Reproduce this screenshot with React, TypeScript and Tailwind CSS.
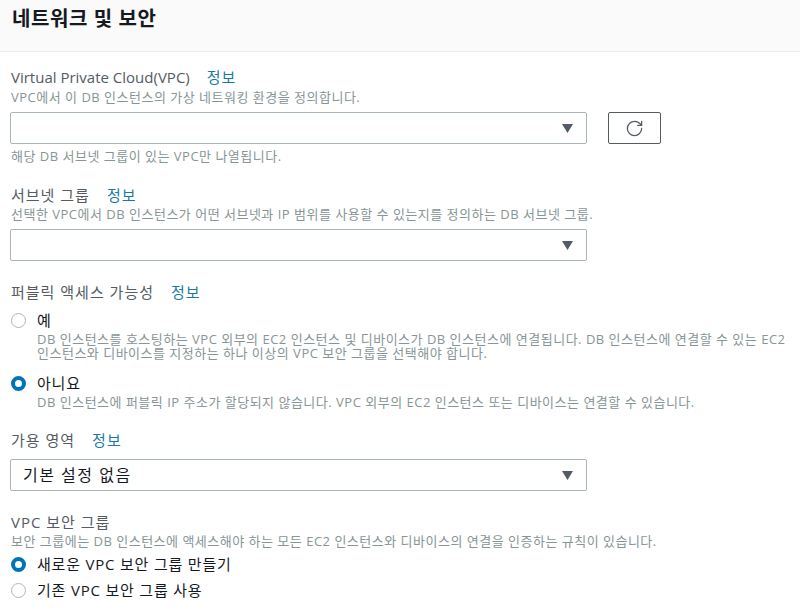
import { RotateCw } from 'lucide-react';

const font = { fontFamily: '"Open Sans", "Noto Sans CJK KR", sans-serif' };

const Info = () => <span className="ml-[17px] tracking-[1px] text-[#187aa0]">정보</span>;

const Label: React.FC<{ text: string; info?: boolean; ko?: boolean; className?: string }> = ({
  text,
  info,
  ko,
  className = '',
}) => (
  <div className={`text-[15px] leading-[20px] text-[#545b64] ${className}`}>
    <span className={ko ? 'tracking-[1px]' : ''}>{text}</span>
    {info && <Info />}
  </div>
);

const Desc: React.FC<{ children: React.ReactNode; className?: string }> = ({ children, className = '' }) => (
  <div className={`text-[13px] leading-[14px] tracking-[0.5px] text-[#879596] ${className}`}>{children}</div>
);

const Select: React.FC<{ value?: string; className?: string }> = ({ value, className = '' }) => (
  <div
    className={`w-[577px] h-[32px] border border-[#aab7b8] rounded-[2px] bg-white flex items-center justify-between pl-[12px] pr-[13px] ${className}`}
  >
    <span className="text-[16px] tracking-[1.5px] text-[#16191f]">{value}</span>
    <svg width="11" height="9" viewBox="0 0 11 9">
      <path d="M0 0 H11 L5.5 9 Z" fill="#545b64" />
    </svg>
  </div>
);

const Radio: React.FC<{ checked?: boolean; label: string; className?: string }> = ({ checked, label, className = '' }) => (
  <div className={`flex items-center h-[20px] ${className}`}>
    {checked ? (
      <span className="w-[15px] h-[15px] rounded-full border-[4px] border-[#0073bb] bg-white" />
    ) : (
      <span className="w-[15px] h-[15px] rounded-full border border-[#aab7b8] bg-white" />
    )}
    <span className="ml-[11px] text-[15px] tracking-[0.8px] text-[#16191f]">{label}</span>
  </div>
);

export default function App() {
  return (
    <div className="w-[800px] h-[612px] bg-white overflow-hidden" style={font}>
      <div className="h-[52px] bg-[#fafafa] border-b border-[#eaeded] pl-[12px] pt-[5px]">
        <h2 className="text-[20px] leading-[28px] tracking-[0.6px] font-bold text-[#16191f]">네트워크 및 보안</h2>
      </div>

      <div className="pl-[10px]">
        <Label text="Virtual Private Cloud(VPC)" info className="mt-[15px] pl-[1px]" />
        <Desc className="mt-[3px] pl-[1px]">VPC에서 이 DB 인스턴스의 가상 네트워킹 환경을 정의합니다.</Desc>
        <div className="flex items-center mt-[8px]">
          <Select />
          <button className="ml-[21px] w-[53px] h-[32px] border border-[#545b64] rounded-[2px] flex items-center justify-center text-[#545b64]">
            <RotateCw size={19} strokeWidth={1.6} />
          </button>
        </div>
        <Desc className="mt-[5px] pl-[1px]">해당 DB 서브넷 그룹이 있는 VPC만 나열됩니다.</Desc>

        <Label text="서브넷 그룹" ko info className="mt-[22px] pl-[1px]" />
        <Desc className="mt-[2px] pl-[1px]">
          선택한 VPC에서 DB 인스턴스가 어떤 서브넷과 IP 범위를 사용할 수 있는지를 정의하는 DB 서브넷 그룹.
        </Desc>
        <Select className="mt-[8px]" />

        <Label text="퍼블릭 액세스 가능성" ko info className="mt-[21px] pl-[1px]" />
        <Radio label="예" className="mt-[8px] pl-[1px]" />
        <Desc className="mt-[2px] pl-[27px] whitespace-nowrap">
          DB 인스턴스를 호스팅하는 VPC 외부의 EC2 인스턴스 및 디바이스가 DB 인스턴스에 연결됩니다. DB 인스턴스에 연결할 수 있는 EC2
          <br />
          인스턴스와 디바이스를 지정하는 하나 이상의 VPC 보안 그룹을 선택해야 합니다.
        </Desc>
        <Radio checked label="아니요" className="mt-[13px] pl-[1px]" />
        <Desc className="mt-[2px] pl-[27px]">
          DB 인스턴스에 퍼블릭 IP 주소가 할당되지 않습니다. VPC 외부의 EC2 인스턴스 또는 디바이스는 연결할 수 있습니다.
        </Desc>

        <Label text="가용 영역" ko info className="mt-[21px] pl-[1px]" />
        <Select value="기본 설정 없음" className="mt-[9px]" />

        <Label text="VPC 보안 그룹" ko className="mt-[21px] pl-[1px]" />
        <Desc className="mt-[2px] pl-[1px]">
          보안 그룹에는 DB 인스턴스에 액세스해야 하는 모든 EC2 인스턴스와 디바이스의 연결을 인증하는 규칙이 있습니다.
        </Desc>
        <Radio checked label="새로운 VPC 보안 그룹 만들기" className="mt-[6px] pl-[1px]" />
        <Radio label="기존 VPC 보안 그룹 사용" className="mt-[6px] pl-[1px]" />
      </div>
    </div>
  );
}
